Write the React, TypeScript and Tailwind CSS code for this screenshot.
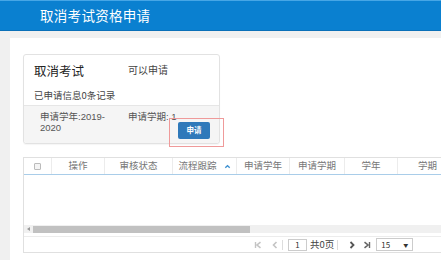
import React from "react";

const cols = [
  { w: "w-[27px]", label: "" },
  { w: "w-[53px]", label: "操作" },
  { w: "w-[68px]", label: "审核状态" },
  { w: "w-[64px]", label: "流程跟踪" },
  { w: "w-[53px]", label: "申请学年" },
  { w: "w-[55px]", label: "申请学期" },
  { w: "w-[53px]", label: "学年" },
  { w: "w-[60px]", label: "学期" },
];

function FirstIcon({ color }: { color: string }) {
  return (
    <svg width="8" height="8" viewBox="0 0 8 8">
      <path d="M1.5 1 V7" stroke={color} strokeWidth="1.4" />
      <path d="M6.5 1.2 L3 4 L6.5 6.8" stroke={color} strokeWidth="1.6" fill="none" />
    </svg>
  );
}
function PrevIcon({ color }: { color: string }) {
  return (
    <svg width="8" height="8" viewBox="0 0 8 8">
      <path d="M5.5 1 L2.5 4 L5.5 7" stroke={color} strokeWidth="1.6" fill="none" />
    </svg>
  );
}
function NextIcon({ color }: { color: string }) {
  return (
    <svg width="8" height="8" viewBox="0 0 8 8">
      <path d="M2.5 1 L5.5 4 L2.5 7" stroke={color} strokeWidth="1.8" fill="none" />
    </svg>
  );
}
function LastIcon({ color }: { color: string }) {
  return (
    <svg width="8" height="8" viewBox="0 0 8 8">
      <path d="M1.5 1.2 L5 4 L1.5 6.8" stroke={color} strokeWidth="1.6" fill="none" />
      <path d="M6.5 1 V7" stroke={color} strokeWidth="1.4" />
    </svg>
  );
}

const latinFirst = { fontFamily: '"Liberation Sans", "Noto Sans CJK SC", sans-serif' };

export default function App() {
  return (
    <div
      className="w-[441px] h-[260px] overflow-hidden bg-[#f0f0f0] flex flex-col"
      style={{ fontFamily: '"Noto Sans CJK SC", "Liberation Sans", sans-serif' }}
    >
      <div className="h-[31px] shrink-0 bg-[#0a80d0] border-t border-[#46a6e6] border-b border-b-[#0a70b8] flex items-center pl-[40px]">
        <span className="text-white text-[13.5px] leading-none tracking-[0.3px]">取消考试资格申请</span>
      </div>
      <div className="flex-1 pt-[7px] pl-[10px] flex">
        <div className="flex-1 bg-white pl-[13px] pt-[16px] flex flex-col min-w-0">
          <div className="relative w-[197px] h-[90px] border border-[#e2e2e2] rounded-[3px] flex flex-col shadow-[0_1px_1px_rgba(0,0,0,0.04)]">
            <div className="h-[51px] px-[10px] pt-[8px] border-b border-[#e6e6e6]">
              <div className="flex items-center h-[16px]">
                <span className="text-[12.5px] text-[#222] w-[94px] leading-none">取消考试</span>
                <span className="text-[10px] text-[#444] leading-none -mt-[3px]">可以申请</span>
              </div>
              <div className="text-[9.5px] text-[#444] mt-[12px] leading-none">已申请信息0条记录</div>
            </div>
            <div className="flex-1 bg-[#f5f5f5] rounded-b-[3px] pl-[16px] pt-[5px] flex" style={latinFirst}>
              <div className="w-[88px] text-[9.5px] text-[#555] leading-[11px] flex flex-col">
                <div className="h-[11px]">申请学年:2019-</div>
                <div className="h-[11px]">2020</div>
              </div>
              <div className="relative text-[9.5px] text-[#555] leading-[11px] h-[11px]">
                申请学期: 1
                <div className="absolute left-[50px] top-[11px] w-[32px] h-[17px] bg-[#2f79ba] rounded-[2px] flex items-center justify-center">
                  <span className="text-white text-[7.5px] font-bold leading-none">申请</span>
                </div>
              </div>
            </div>
            <div className="absolute left-[145px] top-[63px] w-[55px] h-[29px] border border-[#ef9a9a]"></div>
          </div>

          <div className="mt-[13px] w-[470px] border border-[#e0e0e0] flex flex-col">
            <div className="flex h-[17px] border-b border-[#a9cde9] bg-white">
              {cols.map((c, i) => (
                <div
                  key={i}
                  className={`${c.w} shrink-0 flex items-center justify-center ${i > 0 ? "border-l border-[#ececec]" : ""}`}
                >
                  {i === 0 ? (
                    <div className="w-[7px] h-[7px] border border-[#bbb] bg-[#f4f4f4] rounded-[1px]" />
                  ) : (
                    <span className="text-[9.5px] text-[#777] leading-none flex items-center">
                      {c.label}
                      {i === 3 && (
                        <svg width="7" height="7" viewBox="0 0 8 8" className="ml-[7px]">
                          <path d="M1.5 5.5 L4 3 L6.5 5.5" stroke="#3b8fd0" strokeWidth="1.6" fill="none" />
                        </svg>
                      )}
                    </span>
                  )}
                </div>
              ))}
            </div>
            <div className="h-[50px] bg-white" />
            <div className="h-[8px] bg-[#f0f0f0] flex items-center">
              <div className="w-[9px] flex items-center justify-center">
                <div className="w-0 h-0 border-y-[2px] border-y-transparent border-r-[3px] border-r-[#999]" />
              </div>
              <div className="w-[217px] h-[7px] bg-[#c1c1c1]" />
            </div>
            <div className="h-[4px] bg-white border-b border-[#ececec]" />
            <div className="h-[15px] bg-white flex items-center pl-[230px]">
              <div className="w-[17px] flex items-center"><FirstIcon color="#c4c4c4" /></div>
              <div className="w-[11px] flex items-center"><PrevIcon color="#c4c4c4" /></div>
              <div className="w-px h-[10px] bg-[#ddd] mr-[5px]" />
              <div className="w-[19px] h-[12px] border border-[#ccc] flex items-center justify-center text-[8px] text-[#333] leading-none">1</div>
              <span className="text-[9.5px] text-[#444] ml-[3px] leading-none">共0页</span>
              <div className="w-px h-[10px] bg-[#ddd] ml-[3px] mr-[10px]" />
              <div className="w-[15px] flex items-center"><NextIcon color="#555" /></div>
              <div className="w-[13px] flex items-center"><LastIcon color="#666" /></div>
              <div className="w-[37px] h-[13px] border border-[#ccc] flex items-center justify-between px-[4px]">
                <span className="text-[8px] text-[#333] leading-none">15</span>
                <span className="text-[5px] text-[#333] leading-none">▼</span>
              </div>
            </div>
          </div>
        </div>
      </div>
    </div>
  );
}
